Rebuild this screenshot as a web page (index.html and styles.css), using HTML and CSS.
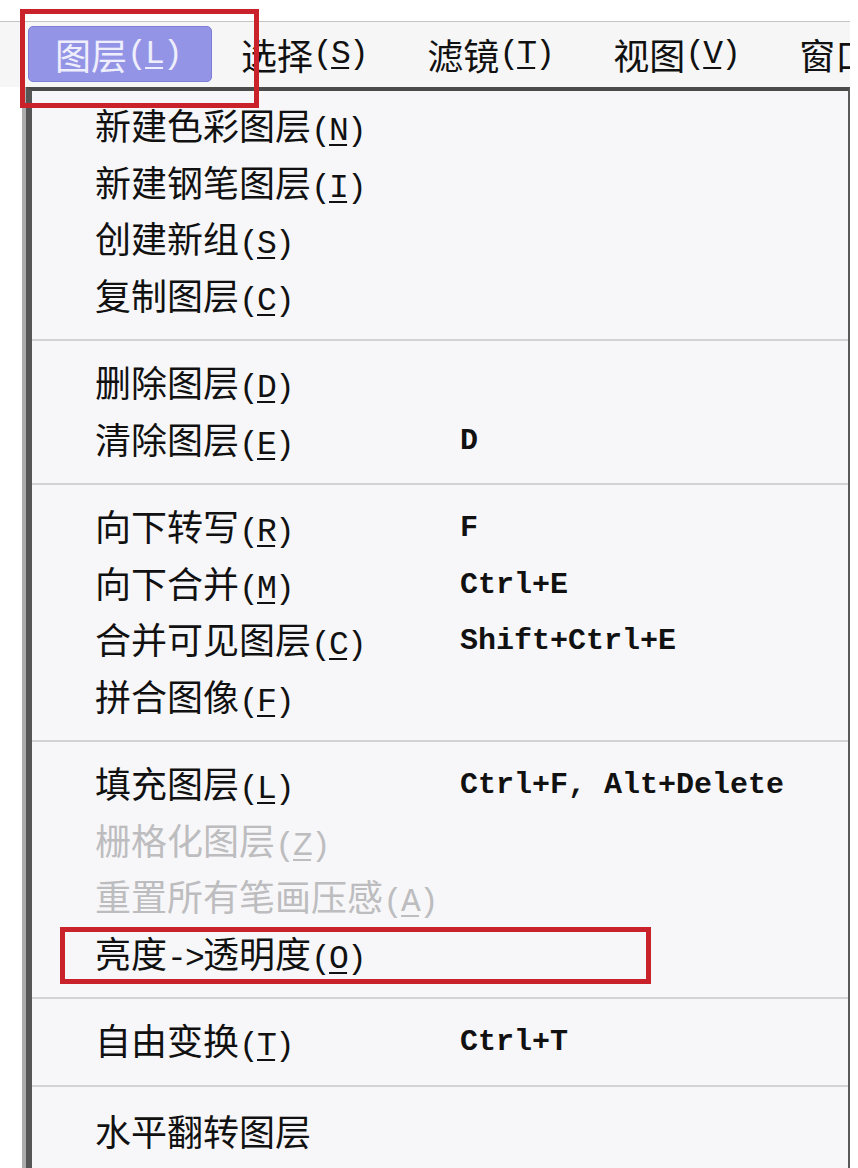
FILE: index.html
```html
<!DOCTYPE html>
<html lang="zh-CN">
<head>
	<meta charset="UTF-8">
	<meta name="viewport" content="width=device-width, initial-scale=1.0">
	<title>图层菜单</title>
<link rel="stylesheet" href="styles.css"></head>

<body>
	<div class="topgap"></div>

	<nav class="menubar">
		<span class="bar-item active">图层<span class="key">(<u>L</u>)</span></span>
		<span class="bar-item">选择<span class="key">(<u>S</u>)</span></span>
		<span class="bar-item">滤镜<span class="key">(<u>T</u>)</span></span>
		<span class="bar-item">视图<span class="key">(<u>V</u>)</span></span>
		<span class="bar-item">窗口</span>
	</nav>

	<ul class="menu">
		<li class="row"><span class="label">新建色彩图层<span class="key">(<u>N</u>)</span></span></li>
		<li class="row"><span class="label">新建钢笔图层<span class="key">(<u>I</u>)</span></span></li>
		<li class="row"><span class="label">创建新组<span class="key">(<u>S</u>)</span></span></li>
		<li class="row"><span class="label">复制图层<span class="key">(<u>C</u>)</span></span></li>
		<li class="sep"></li>
		<li class="row"><span class="label">删除图层<span class="key">(<u>D</u>)</span></span></li>
		<li class="row"><span class="label">清除图层<span class="key">(<u>E</u>)</span></span><span class="accel">D</span></li>
		<li class="sep"></li>
		<li class="row"><span class="label">向下转写<span class="key">(<u>R</u>)</span></span><span class="accel">F</span></li>
		<li class="row"><span class="label">向下合并<span class="key">(<u>M</u>)</span></span><span class="accel">Ctrl+E</span></li>
		<li class="row"><span class="label">合并可见图层<span class="key">(<u>C</u>)</span></span><span class="accel">Shift+Ctrl+E</span></li>
		<li class="row"><span class="label">拼合图像<span class="key">(<u>F</u>)</span></span></li>
		<li class="sep"></li>
		<li class="row"><span class="label">填充图层<span class="key">(<u>L</u>)</span></span><span class="accel">Ctrl+F, Alt+Delete</span></li>
		<li class="row disabled"><span class="label">栅格化图层<span class="key">(<u>Z</u>)</span></span></li>
		<li class="row disabled"><span class="label">重置所有笔画压感<span class="key">(<u>A</u>)</span></span></li>
		<li class="row"><span class="label">亮度<span class="key">-&gt;</span>透明度<span class="key">(<u>O</u>)</span></span></li>
		<li class="sep"></li>
		<li class="row"><span class="label">自由变换<span class="key">(<u>T</u>)</span></span><span class="accel">Ctrl+T</span></li>
		<li class="sep"></li>
		<li class="row"><span class="label">水平翻转图层</span></li>
	</ul>

	<!-- red annotation boxes drawn over the screenshot -->
	<div class="mark mark-bar"></div>
	<div class="mark mark-item"></div>
</body>
</html>
```

FILE: styles.css
```css
html,
body {
  height: 1168px;
  overflow: hidden;
}

body {
  margin: 0;
  background-color: #ffffff;
  color: #111111;
  font-family: "Noto Sans CJK SC", "Noto Sans", sans-serif;
  position: relative;
}

.topgap {
  height: 21px;
}

.menubar {
  display: flex;
  box-sizing: border-box;
  width: 850px;
  height: 66px;
  padding: 4px 0 0 28px;
  border-top: 1px solid #c4c4c4;
  background-color: #f6f6f7;
  overflow: hidden;
  white-space: nowrap;
}

.bar-item {
  display: flex;
  align-items: center;
  flex-shrink: 0;
  box-sizing: border-box;
  height: 56px;
  padding: 0 33px 0 27px;
  font-size: 36px;
  line-height: 1;
}

.bar-item.active {
  background-color: #9494e6;
  border: 1px solid #7d7dd8;
  border-radius: 5px;
  padding-left: 26px;
  padding-right: 30px;
  margin-right: 2px;
  color: #eeeefc;
}

.key {
  font-family: "Liberation Mono", monospace;
  font-size: 33px;
  letter-spacing: -1.8px;
}

.key u {
  text-underline-offset: 4px;
  text-decoration-thickness: 2px;
}

.menu {
  list-style: none;
  margin: 0 0 0 26px;
  width: 816px;
  padding: 8px 0 60px 0;
  border-left: 6px solid #565656;
  border-top: 4px solid #4b4b4b;
  border-right: 2px solid #5a5a5a;
  box-shadow: -4px 0 0 #acacac;
  background-color: #f7f7f9;
}

.row {
  display: grid;
  grid-template-columns: 365px auto;
  align-items: center;
  height: 56.5px;
  padding-left: 63px;
  font-size: 36px;
  line-height: 1;
  white-space: nowrap;
}

.row.disabled {
  color: #bdbdbf;
}

.accel {
  font-family: "Liberation Mono", monospace;
  font-size: 30px;
  font-weight: bold;
}

.sep {
  height: 2px;
  margin: 14px 0 15px 0;
  background-color: #d3d3d5;
}

.mark {
  position: absolute;
  box-sizing: border-box;
  border: 5px solid #c9222a;
}

.mark-bar {
  left: 20px;
  top: 9px;
  width: 239px;
  height: 99px;
}

.mark-item {
  left: 60px;
  top: 927px;
  width: 591px;
  height: 57px;
}
```
